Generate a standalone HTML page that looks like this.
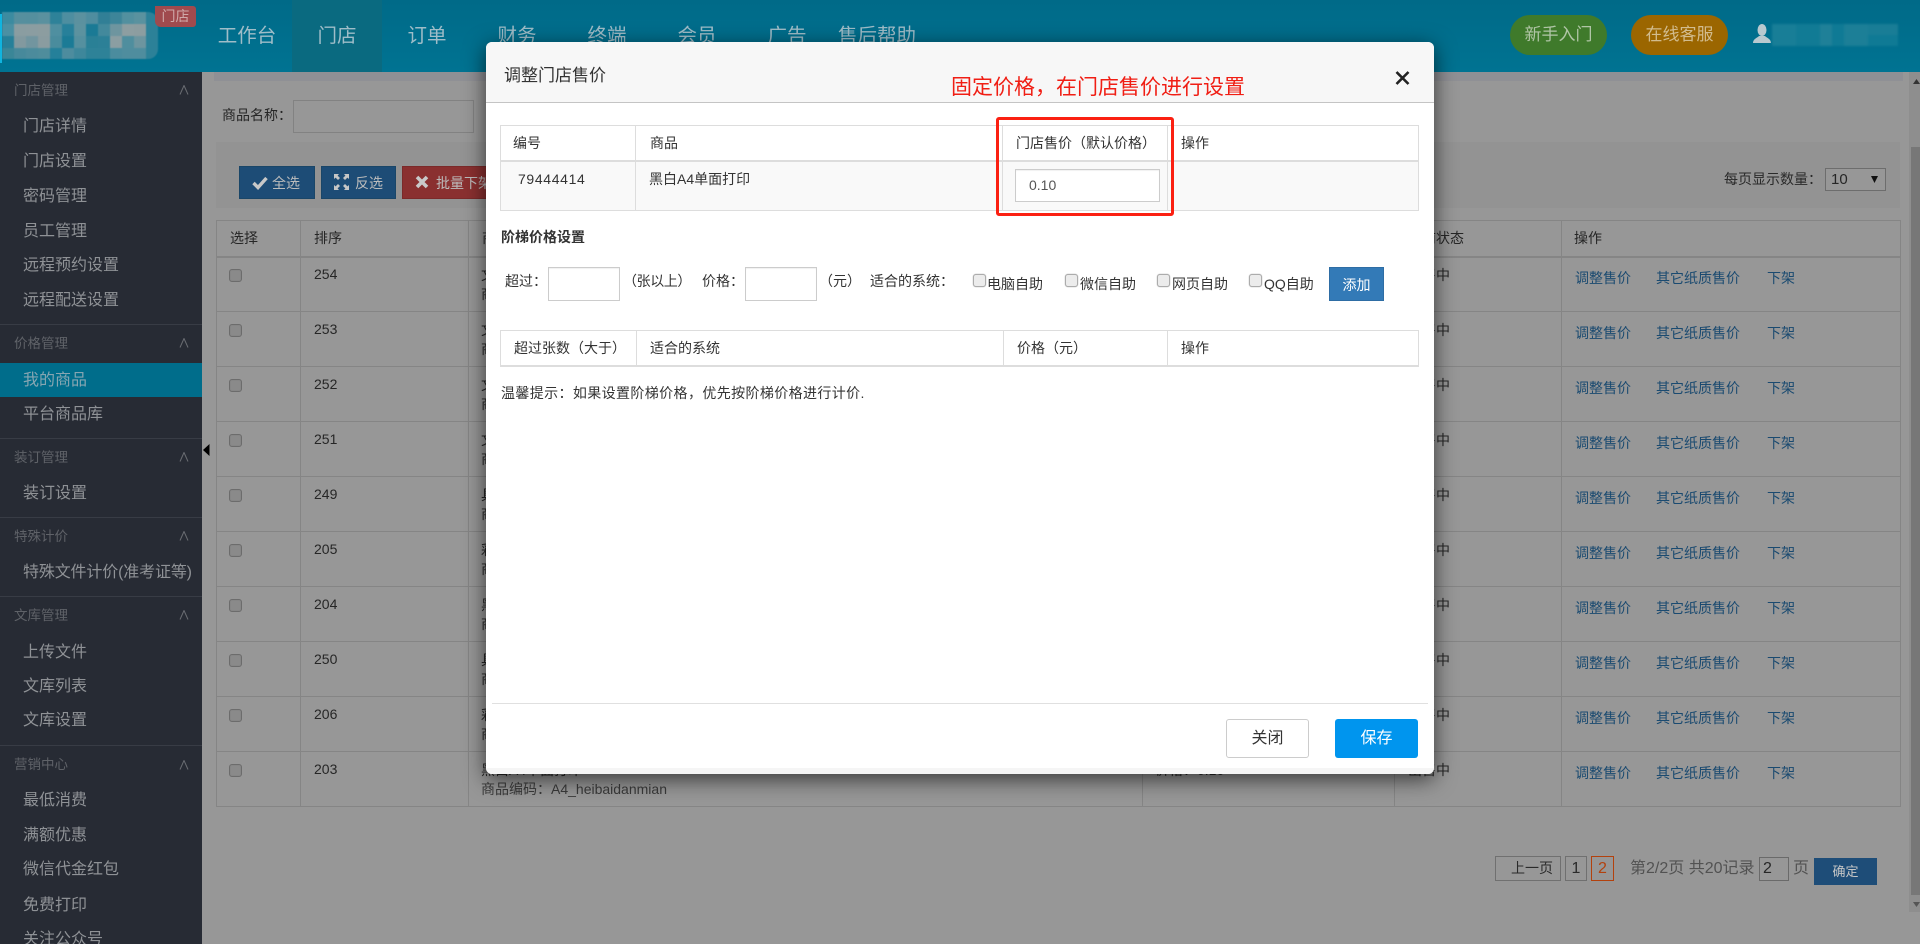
<!DOCTYPE html>
<html lang="zh-CN">
<head>
<meta charset="utf-8">
<title>调整门店售价</title>
<style>
*{box-sizing:border-box}
html,body{margin:0;padding:0;width:1920px;height:944px;overflow:hidden;background:#979797;font-family:"Liberation Sans","Noto Sans CJK SC",sans-serif;font-size:14px;color:#262626}
.a{position:absolute;white-space:nowrap}
#top{position:absolute;left:0;top:0;width:1920px;height:72px;background:linear-gradient(180deg,#006a88,#007392)}
.nav{position:absolute;top:0;height:72px;line-height:72px;width:90px;text-align:center;font-size:19.5px;color:#9fbdc8}
#side{position:absolute;left:0;top:72px;width:202px;height:872px;background:#272b34;overflow:hidden}
.sh{position:absolute;left:14px;font-size:13.5px;height:20px;line-height:20px;color:#5f6268;white-space:nowrap}
.si{position:absolute;left:23px;font-size:16px;height:24px;line-height:24px;color:#8f9296;white-space:nowrap}
.sd{position:absolute;left:0;width:202px;height:1px;background:#383c45}
.ch{position:absolute;left:179px;width:10px;height:10px}
.cb{position:absolute;width:13px;height:13px;background:#8a8a8a;border:1px solid #6c6c6c;border-radius:3px;box-shadow:inset 0 0 1px #777}
.btn{position:absolute;top:166px;height:33px;line-height:33px;color:#bcbcbc;font-size:14px;border:1px solid #1a4668;background:#1d4c76;white-space:nowrap}
table.m{position:absolute;left:216px;top:220px;width:1684px;height:586px;border-collapse:collapse;table-layout:fixed;border:1px solid #858585}
table.m td,table.m th{border:1px solid #858585;padding:0;vertical-align:top;font-weight:normal;text-align:left;height:55px}
table.m th{height:36px;vertical-align:middle;padding-left:13px;border-bottom:2px solid #858585}
table.m th:last-child{padding-left:12px}
.lnk{position:absolute;color:#1a4a70;white-space:nowrap;font-size:14px}
.pg{position:absolute;top:856px;height:25px;line-height:23px;border:1px solid #707070;text-align:center;font-size:16px;color:#2a2a2a}
#modal{position:absolute;left:486px;top:42px;width:948px;height:732px;background:#fff;border-radius:6px;box-shadow:0 5px 22px rgba(0,0,0,.65);overflow:hidden}
#mh{position:absolute;left:0;top:0;width:948px;height:61px;background:#f7f7f7;border-bottom:1px solid #c4c4c4}
.t{position:absolute;left:14px;width:919px;background:#fff;border:1px solid #ddd}
.v{position:absolute;top:0;bottom:0;width:1px;background:#ddd}
.mt{position:absolute;color:#333;font-size:14px;line-height:20px;height:20px;white-space:nowrap}
.mi{position:absolute;background:#fff;border:1px solid #ccc;box-shadow:inset 0 1px 1px rgba(0,0,0,.06)}
.mc{position:absolute;width:13px;height:13px;background:#ececec;border:1px solid #acacac;border-radius:3px;box-shadow:0 0 1px #999}
.l{position:absolute;left:481px;line-height:20px;white-space:nowrap}
.s{position:absolute;left:1408px;line-height:20px;white-space:nowrap}
.n{position:absolute;left:314px;line-height:20px;white-space:nowrap}
</style>
</head>
<body>

<div id="top">
  <svg class="a" style="left:0;top:0;filter:blur(.5px)" width="165" height="72" viewBox="0 0 165 72" shape-rendering="crispEdges">
    <rect x="2" y="12" width="156" height="47" rx="10" fill="#2c8198" shape-rendering="auto"/>
    <g>
      <rect x="2" y="12" width="12" height="12" fill="#3c8ba0"/><rect x="14" y="12" width="12" height="12" fill="#568f9e"/><rect x="26" y="12" width="12" height="12" fill="#558f9e"/><rect x="38" y="12" width="12" height="12" fill="#5a919f"/><rect x="50" y="12" width="12" height="12" fill="#2e8299"/><rect x="62" y="12" width="12" height="12" fill="#4e8ea0"/><rect x="74" y="12" width="12" height="12" fill="#5b919f"/><rect x="86" y="12" width="12" height="12" fill="#4f8d9f"/><rect x="98" y="12" width="12" height="12" fill="#317f96"/><rect x="110" y="12" width="12" height="12" fill="#3d8599"/><rect x="122" y="12" width="12" height="12" fill="#52909f"/><rect x="134" y="12" width="12" height="12" fill="#5a929f"/>
      <rect x="2" y="24" width="12" height="12" fill="#4b90a3"/><rect x="14" y="24" width="12" height="12" fill="#8a9da1"/><rect x="26" y="24" width="12" height="12" fill="#8b9da1"/><rect x="38" y="24" width="12" height="12" fill="#8c9da0"/><rect x="50" y="24" width="12" height="12" fill="#4f8fa0"/><rect x="62" y="24" width="12" height="12" fill="#27809a"/><rect x="74" y="24" width="12" height="12" fill="#5c929f"/><rect x="86" y="24" width="12" height="12" fill="#1a7a95"/><rect x="98" y="24" width="12" height="12" fill="#43899c"/><rect x="110" y="24" width="12" height="12" fill="#6e959f"/><rect x="122" y="24" width="12" height="12" fill="#8d9ea1"/><rect x="134" y="24" width="12" height="12" fill="#8c9da0"/>
      <rect x="2" y="36" width="12" height="12" fill="#268099"/><rect x="14" y="36" width="12" height="12" fill="#82999f"/><rect x="26" y="36" width="12" height="12" fill="#72959f"/><rect x="38" y="36" width="12" height="12" fill="#8a9ca0"/><rect x="50" y="36" width="12" height="12" fill="#4a8c9d"/><rect x="62" y="36" width="12" height="12" fill="#1b7b96"/><rect x="74" y="36" width="12" height="12" fill="#55909f"/><rect x="86" y="36" width="12" height="12" fill="#2a8096"/><rect x="98" y="36" width="12" height="12" fill="#2c8097"/><rect x="110" y="36" width="12" height="12" fill="#8b9ea2"/><rect x="122" y="36" width="12" height="12" fill="#4f8e9e"/><rect x="134" y="36" width="12" height="12" fill="#6d959f"/>
      <rect x="2" y="48" width="12" height="11" fill="#3a8697"/><rect x="14" y="48" width="12" height="11" fill="#47899b"/><rect x="26" y="48" width="12" height="11" fill="#4c8b9c"/><rect x="38" y="48" width="12" height="11" fill="#4f8d9c"/><rect x="50" y="48" width="12" height="11" fill="#25809a"/><rect x="62" y="48" width="12" height="11" fill="#4d8c9e"/><rect x="74" y="48" width="12" height="11" fill="#3e879b"/><rect x="86" y="48" width="12" height="11" fill="#2e8298"/><rect x="98" y="48" width="12" height="11" fill="#2e8298"/><rect x="110" y="48" width="12" height="11" fill="#4b8c9e"/><rect x="122" y="48" width="12" height="11" fill="#4f8d9e"/><rect x="134" y="48" width="12" height="11" fill="#4f8d9e"/>
    </g>
  </svg>
  <div class="a" style="left:0;top:14px;width:2px;height:49px;background:#10b4df"></div>
  <div class="a" style="left:155px;top:6px;width:41px;height:21px;line-height:20px;background:#a04a4e;border-radius:0 3px 3px 6px;color:#cfa9a9;font-size:14px;text-align:center">门店</div>
  <div class="a" style="left:292px;top:0;width:90px;height:72px;background:#0a6a80"></div>
  <div class="nav" style="left:202px">工作台</div>
  <div class="nav" style="left:292px">门店</div>
  <div class="nav" style="left:382px">订单</div>
  <div class="nav" style="left:472px">财务</div>
  <div class="nav" style="left:562px">终端</div>
  <div class="nav" style="left:652px">会员</div>
  <div class="nav" style="left:742px">广告</div>
  <div class="nav" style="left:832px">售后帮助</div>
  <div class="a" style="left:1510px;top:15px;width:97px;height:40px;line-height:40px;border-radius:20px;background:#3f7a2b;color:#b0c5a6;font-size:17px;text-align:center">新手入门</div>
  <div class="a" style="left:1631px;top:15px;width:97px;height:40px;line-height:40px;border-radius:20px;background:#9b6600;color:#d2bc8e;font-size:17px;text-align:center">在线客服</div>
  <svg class="a" style="left:1752px;top:24px" width="20" height="20" viewBox="0 0 20 20"><ellipse cx="10" cy="6" rx="4.5" ry="6" fill="#b9c9cf"/><path d="M1 19c0-4 4-5 6-7h6c2 2 6 3 6 7z" fill="#b9c9cf"/></svg>
  <svg class="a" style="left:1772px;top:24px;filter:blur(1px)" width="128" height="24" viewBox="0 0 128 24" shape-rendering="crispEdges">
    <rect width="126" height="22" fill="#0f7a95"/><rect x="0" width="24" height="22" fill="#187e97"/><rect x="24" width="24" height="22" fill="#117b95"/><rect x="48" width="12" height="22" fill="#1f8098"/><rect x="72" width="24" height="22" fill="#1c7f97"/><rect x="96" width="30" height="11" fill="#197d96"/>
  </svg>
</div>

<div id="side">
  <div class="sh" style="top:9px">门店管理</div>
  <svg class="ch" style="top:13px" viewBox="0 0 10 10"><path d="M1 9.5 5 .5l4 9" fill="none" stroke="#6a6d72" stroke-width="1"/></svg>
  <div class="si" style="top:43px">门店详情</div>
  <div class="si" style="top:78px">门店设置</div>
  <div class="si" style="top:113px">密码管理</div>
  <div class="si" style="top:148px">员工管理</div>
  <div class="si" style="top:182px">远程预约设置</div>
  <div class="si" style="top:217px">远程配送设置</div>
  <div class="sd" style="top:252px"></div>

  <div class="sh" style="top:262px">价格管理</div>
  <svg class="ch" style="top:266px" viewBox="0 0 10 10"><path d="M1 9.5 5 .5l4 9" fill="none" stroke="#6a6d72" stroke-width="1"/></svg>
  <div class="a" style="left:0;top:291px;width:202px;height:34px;background:#006d8b"></div>
  <div class="si" style="top:297px;color:#86a6b2">我的商品</div>
  <div class="si" style="top:331px">平台商品库</div>
  <div class="sd" style="top:366px"></div>

  <div class="sh" style="top:376px">装订管理</div>
  <svg class="ch" style="top:380px" viewBox="0 0 10 10"><path d="M1 9.5 5 .5l4 9" fill="none" stroke="#6a6d72" stroke-width="1"/></svg>
  <div class="si" style="top:410px">装订设置</div>
  <div class="sd" style="top:445px"></div>

  <div class="sh" style="top:455px">特殊计价</div>
  <svg class="ch" style="top:459px" viewBox="0 0 10 10"><path d="M1 9.5 5 .5l4 9" fill="none" stroke="#6a6d72" stroke-width="1"/></svg>
  <div class="si" style="top:489px;letter-spacing:-.15px">特殊文件计价(准考证等)</div>
  <div class="sd" style="top:524px"></div>

  <div class="sh" style="top:534px">文库管理</div>
  <svg class="ch" style="top:538px" viewBox="0 0 10 10"><path d="M1 9.5 5 .5l4 9" fill="none" stroke="#6a6d72" stroke-width="1"/></svg>
  <div class="si" style="top:569px">上传文件</div>
  <div class="si" style="top:603px">文库列表</div>
  <div class="si" style="top:637px">文库设置</div>
  <div class="sd" style="top:673px"></div>

  <div class="sh" style="top:683px">营销中心</div>
  <svg class="ch" style="top:688px" viewBox="0 0 10 10"><path d="M1 9.5 5 .5l4 9" fill="none" stroke="#6a6d72" stroke-width="1"/></svg>
  <div class="si" style="top:717px">最低消费</div>
  <div class="si" style="top:752px">满额优惠</div>
  <div class="si" style="top:786px">微信代金红包</div>
  <div class="si" style="top:822px">免费打印</div>
  <div class="si" style="top:856px">关注公众号</div>
</div>

<!-- collapse arrow -->
<svg class="a" style="left:203px;top:443px" width="7" height="14" viewBox="0 0 7 14"><path d="M6.5 1v12L0 7z" fill="#000"/></svg>

<!-- content -->
<div class="a" style="left:214px;top:72px;width:1689px;height:9px;background:#8f9095"></div>
<div class="a" style="left:1909px;top:72px;width:11px;height:840px;background:#8e8e8e"></div>
<div class="a" style="left:1911px;top:147px;width:9px;height:748px;background:#777"></div>
<svg class="a" style="left:1913px;top:79px" width="7" height="5"><path d="M0 5 3.5 0 7 5z" fill="#333"/></svg>
<svg class="a" style="left:1913px;top:902px" width="7" height="5"><path d="M0 0 3.5 5 7 0z" fill="#555"/></svg>

<div class="a" style="left:222px;top:105px;line-height:20px">商品名称：</div>
<div class="a" style="left:293px;top:100px;width:181px;height:33px;border:1px solid #828282;background:#979797"></div>

<div class="a" style="left:216px;top:142px;width:1684px;height:66px;background:#939393"></div>
<div class="btn" style="left:239px;width:76px;padding-left:32px">全选</div>
<svg class="a" style="left:252px;top:175px" width="16" height="15" viewBox="0 0 16 15"><path d="M1.5 8 6 12.5 14.5 3" fill="none" stroke="#c8c8c8" stroke-width="3.4"/></svg>
<div class="btn" style="left:321px;width:75px;padding-left:33px">反选</div>
<svg class="a" style="left:334px;top:174px" width="15" height="16" viewBox="0 0 15 16"><g fill="#c6c6c6"><path d="M0 0h5L3.6 1.6 6 4 4 6 1.6 3.6 0 5zM15 0v5l-1.600-1.400L11 6 9 4l2.400-2.400L10 0zM0 16v-5l1.600 1.400L4 10l2 2-2.400 2.400L5 16zM15 16h-5l1.400-1.600L9 12l2-2 2.400 2.400L15 11z"/></g></svg>
<div class="btn" style="left:402px;width:90px;padding-left:33px;background:#8a3030;border-color:#7b2a2a">批量下架</div>
<svg class="a" style="left:415px;top:175px" width="14" height="14" viewBox="0 0 14 14"><path d="M2 2 12 12M12 2 2 12" stroke="#c9c9c9" stroke-width="3.6"/></svg>

<div class="a" style="left:1724px;top:169px;line-height:20px;color:#2a2a2a">每页显示数量：</div>
<div class="a" style="left:1825px;top:168px;width:61px;height:23px;border:1px solid #6d6d6d;line-height:21px;padding-left:5px;font-size:15px;background:#979797">10</div>
<svg class="a" style="left:1871px;top:176px" width="7" height="7"><path d="M0 0h7L3.500 7z" fill="#111"/></svg>

<table class="m">
<colgroup><col style="width:84px"><col style="width:168px"><col style="width:674px"><col style="width:252px"><col style="width:167px"><col style="width:339px"></colgroup>
<tr><th>选择</th><th>排序</th><th>商品</th><th>价格</th><th>当前状态</th><th>操作</th></tr>
<tr><td></td><td></td><td></td><td></td><td></td><td></td></tr>
<tr><td></td><td></td><td></td><td></td><td></td><td></td></tr>
<tr><td></td><td></td><td></td><td></td><td></td><td></td></tr>
<tr><td></td><td></td><td></td><td></td><td></td><td></td></tr>
<tr><td></td><td></td><td></td><td></td><td></td><td></td></tr>
<tr><td></td><td></td><td></td><td></td><td></td><td></td></tr>
<tr><td></td><td></td><td></td><td></td><td></td><td></td></tr>
<tr><td></td><td></td><td></td><td></td><td></td><td></td></tr>
<tr><td></td><td></td><td></td><td></td><td></td><td></td></tr>
<tr><td></td><td></td><td></td><td></td><td></td><td></td></tr>
</table>

<!-- row 1 -->
<div class="cb" style="left:229px;top:269px"></div><div class="n" style="top:264px">254</div><div class="l" style="top:265px">文档打印</div><div class="l" style="top:284px">商品编码</div><div class="s" style="top:265px">出售中</div><div class="lnk" style="left:1575px;top:268px">调整售价</div><div class="lnk" style="left:1656px;top:268px">其它纸质售价</div><div class="lnk" style="left:1767px;top:268px">下架</div>
<!-- row 2 -->
<div class="cb" style="left:229px;top:324px"></div><div class="n" style="top:319px">253</div><div class="l" style="top:320px">文档打印</div><div class="l" style="top:339px">商品编码</div><div class="s" style="top:320px">出售中</div><div class="lnk" style="left:1575px;top:323px">调整售价</div><div class="lnk" style="left:1656px;top:323px">其它纸质售价</div><div class="lnk" style="left:1767px;top:323px">下架</div>
<!-- row 3 -->
<div class="cb" style="left:229px;top:379px"></div><div class="n" style="top:374px">252</div><div class="l" style="top:375px">文档打印</div><div class="l" style="top:394px">商品编码</div><div class="s" style="top:375px">出售中</div><div class="lnk" style="left:1575px;top:378px">调整售价</div><div class="lnk" style="left:1656px;top:378px">其它纸质售价</div><div class="lnk" style="left:1767px;top:378px">下架</div>
<!-- row 4 -->
<div class="cb" style="left:229px;top:434px"></div><div class="n" style="top:429px">251</div><div class="l" style="top:430px">文档打印</div><div class="l" style="top:449px">商品编码</div><div class="s" style="top:430px">出售中</div><div class="lnk" style="left:1575px;top:433px">调整售价</div><div class="lnk" style="left:1656px;top:433px">其它纸质售价</div><div class="lnk" style="left:1767px;top:433px">下架</div>
<!-- row 5 -->
<div class="cb" style="left:229px;top:489px"></div><div class="n" style="top:484px">249</div><div class="l" style="top:485px">具体商品</div><div class="l" style="top:504px">商品编码</div><div class="s" style="top:485px">出售中</div><div class="lnk" style="left:1575px;top:488px">调整售价</div><div class="lnk" style="left:1656px;top:488px">其它纸质售价</div><div class="lnk" style="left:1767px;top:488px">下架</div>
<!-- row 6 -->
<div class="cb" style="left:229px;top:544px"></div><div class="n" style="top:539px">205</div><div class="l" style="top:540px">彩色打印</div><div class="l" style="top:559px">商品编码</div><div class="s" style="top:540px">出售中</div><div class="lnk" style="left:1575px;top:543px">调整售价</div><div class="lnk" style="left:1656px;top:543px">其它纸质售价</div><div class="lnk" style="left:1767px;top:543px">下架</div>
<!-- row 7 -->
<div class="cb" style="left:229px;top:599px"></div><div class="n" style="top:594px">204</div><div class="l" style="top:595px">黑白打印</div><div class="l" style="top:614px">商品编码</div><div class="s" style="top:595px">出售中</div><div class="lnk" style="left:1575px;top:598px">调整售价</div><div class="lnk" style="left:1656px;top:598px">其它纸质售价</div><div class="lnk" style="left:1767px;top:598px">下架</div>
<!-- row 8 -->
<div class="cb" style="left:229px;top:654px"></div><div class="n" style="top:649px">250</div><div class="l" style="top:650px">具体商品</div><div class="l" style="top:669px">商品编码</div><div class="s" style="top:650px">出售中</div><div class="lnk" style="left:1575px;top:653px">调整售价</div><div class="lnk" style="left:1656px;top:653px">其它纸质售价</div><div class="lnk" style="left:1767px;top:653px">下架</div>
<!-- row 9 -->
<div class="cb" style="left:229px;top:709px"></div><div class="n" style="top:704px">206</div><div class="l" style="top:705px">彩色打印</div><div class="l" style="top:724px">商品编码</div><div class="s" style="top:705px">出售中</div><div class="lnk" style="left:1575px;top:708px">调整售价</div><div class="lnk" style="left:1656px;top:708px">其它纸质售价</div><div class="lnk" style="left:1767px;top:708px">下架</div>
<!-- row 10 -->
<div class="cb" style="left:229px;top:764px"></div><div class="n" style="top:759px">203</div><div class="l" style="top:760px">黑白A4单面打印</div><div class="l" style="top:779px;color:#3a3a3a">商品编码：A4_heibaidanmian</div><div class="a" style="left:1155px;top:760px;line-height:20px">价格：0.10</div><div class="s" style="top:760px">出售中</div><div class="lnk" style="left:1575px;top:763px">调整售价</div><div class="lnk" style="left:1656px;top:763px">其它纸质售价</div><div class="lnk" style="left:1767px;top:763px">下架</div>

<!-- pagination -->
<div class="pg" style="left:1495px;width:66px;font-size:14px;text-align:right;padding-right:7px">上一页</div>
<div class="pg" style="left:1565px;width:22px">1</div>
<div class="pg" style="left:1591px;width:23px;border-color:#b3410d;color:#b3410d">2</div>
<div class="a" style="left:1630px;top:857px;font-size:16px;line-height:24px;color:#525252">第2/2页 共20记录</div>
<div class="a" style="left:1759px;top:857px;width:30px;height:24px;border:1px solid #6a6a6a;font-size:16px;line-height:22px;padding-left:3px">2</div>
<div class="a" style="left:1793px;top:857px;font-size:16px;line-height:24px;color:#525252">页</div>
<div class="a" style="left:1814px;top:858px;width:63px;height:27px;line-height:27px;background:#1e4d78;color:#c6c6c6;font-size:13px;text-align:center">确定</div>

<!-- modal -->
<div id="modal">
  <div id="mh"></div>
  <div class="a" style="left:18px;top:22px;font-size:17px;line-height:24px;color:#333">调整门店售价</div>
  <svg class="a" style="left:909px;top:29px" width="15" height="14" viewBox="0 0 15 14"><path d="M1.500 1 13.500 13M13.500 1 1.500 13" stroke="#222" stroke-width="2.600" fill="none"/></svg>
  <div class="a" style="left:465px;top:32px;font-size:21px;line-height:28px;color:#f01e14">固定价格，在门店售价进行设置</div>

  <!-- table 1 -->
  <div class="t" style="top:83px;height:86px">
    <div class="a" style="left:0;top:34px;width:917px;height:50px;background:#f9f9f9"></div>
    <div class="a" style="left:0;top:34px;width:917px;height:2px;background:#ddd"></div>
    <div class="v" style="left:134px"></div>
    <div class="v" style="left:501px"></div>
    <div class="v" style="left:666px"></div>
  </div>
  <div class="mt" style="left:27px;top:91px">编号</div>
  <div class="mt" style="left:164px;top:91px">商品</div>
  <div class="mt" style="left:530px;top:91px">门店售价（默认价格）</div>
  <div class="mt" style="left:695px;top:91px">操作</div>
  <div class="mt" style="left:32px;top:127px;letter-spacing:.65px">79444414</div>
  <div class="mt" style="left:163px;top:127px">黑白A4单面打印</div>
  <div class="mi" style="left:529px;top:127px;width:145px;height:33px;line-height:31px;padding-left:13px;color:#555;font-size:14px">0.10</div>

  <div class="a" style="left:510px;top:75px;width:178px;height:99px;border:3px solid #fb2012;border-radius:3px"></div>

  <div class="mt" style="left:15px;top:185px;font-weight:bold">阶梯价格设置</div>

  <!-- form row -->
  <div class="mt" style="left:19px;top:229px">超过：</div>
  <div class="mi" style="left:62px;top:225px;width:72px;height:34px"></div>
  <div class="mt" style="left:137px;top:229px;letter-spacing:-.4px">（张以上）</div>
  <div class="mt" style="left:216px;top:229px">价格：</div>
  <div class="mi" style="left:259px;top:225px;width:72px;height:34px"></div>
  <div class="mt" style="left:333px;top:229px">（元）</div>
  <div class="mt" style="left:384px;top:229px">适合的系统：</div>

  <div class="mc" style="left:487px;top:232px"></div><div class="mt" style="left:501px;top:232px">电脑自助</div>
  <div class="mc" style="left:579px;top:232px"></div><div class="mt" style="left:594px;top:232px">微信自助</div>
  <div class="mc" style="left:671px;top:232px"></div><div class="mt" style="left:686px;top:232px">网页自助</div>
  <div class="mc" style="left:763px;top:232px"></div><div class="mt" style="left:778px;top:232px">QQ自助</div>
  <div class="a" style="left:843px;top:225px;width:55px;height:34px;line-height:34px;background:#337ab7;border:1px solid #2e6da4;color:#fff;font-size:14px;text-align:center">添加</div>

  <!-- table 2 -->
  <div class="t" style="top:288px;height:37px;border-bottom:2px solid #ddd">
    <div class="v" style="left:135px"></div>
    <div class="v" style="left:502px"></div>
    <div class="v" style="left:666px"></div>
  </div>
  <div class="mt" style="left:28px;top:296px">超过张数（大于）</div>
  <div class="mt" style="left:164px;top:296px">适合的系统</div>
  <div class="mt" style="left:531px;top:296px">价格（元）</div>
  <div class="mt" style="left:695px;top:296px">操作</div>

  <div class="mt" style="left:15px;top:341px;letter-spacing:.38px">温馨提示：如果设置阶梯价格，优先按阶梯价格进行计价.</div>

  <!-- footer -->
  <div class="a" style="left:6px;top:661px;width:936px;height:1px;background:#e0e0e0"></div>
  <div class="a" style="left:740px;top:677px;width:83px;height:39px;line-height:37px;background:#fff;border:1px solid #ccc;border-radius:3px;color:#333;font-size:16px;text-align:center">关闭</div>
  <div class="a" style="left:849px;top:677px;width:83px;height:39px;line-height:39px;background:#0095ee;border-radius:3px;color:#fff;font-size:16px;text-align:center">保存</div>
  <div class="a" style="left:0;top:726px;width:948px;height:6px;background:#f5f5f5"></div>
</div>

</body>
</html>
